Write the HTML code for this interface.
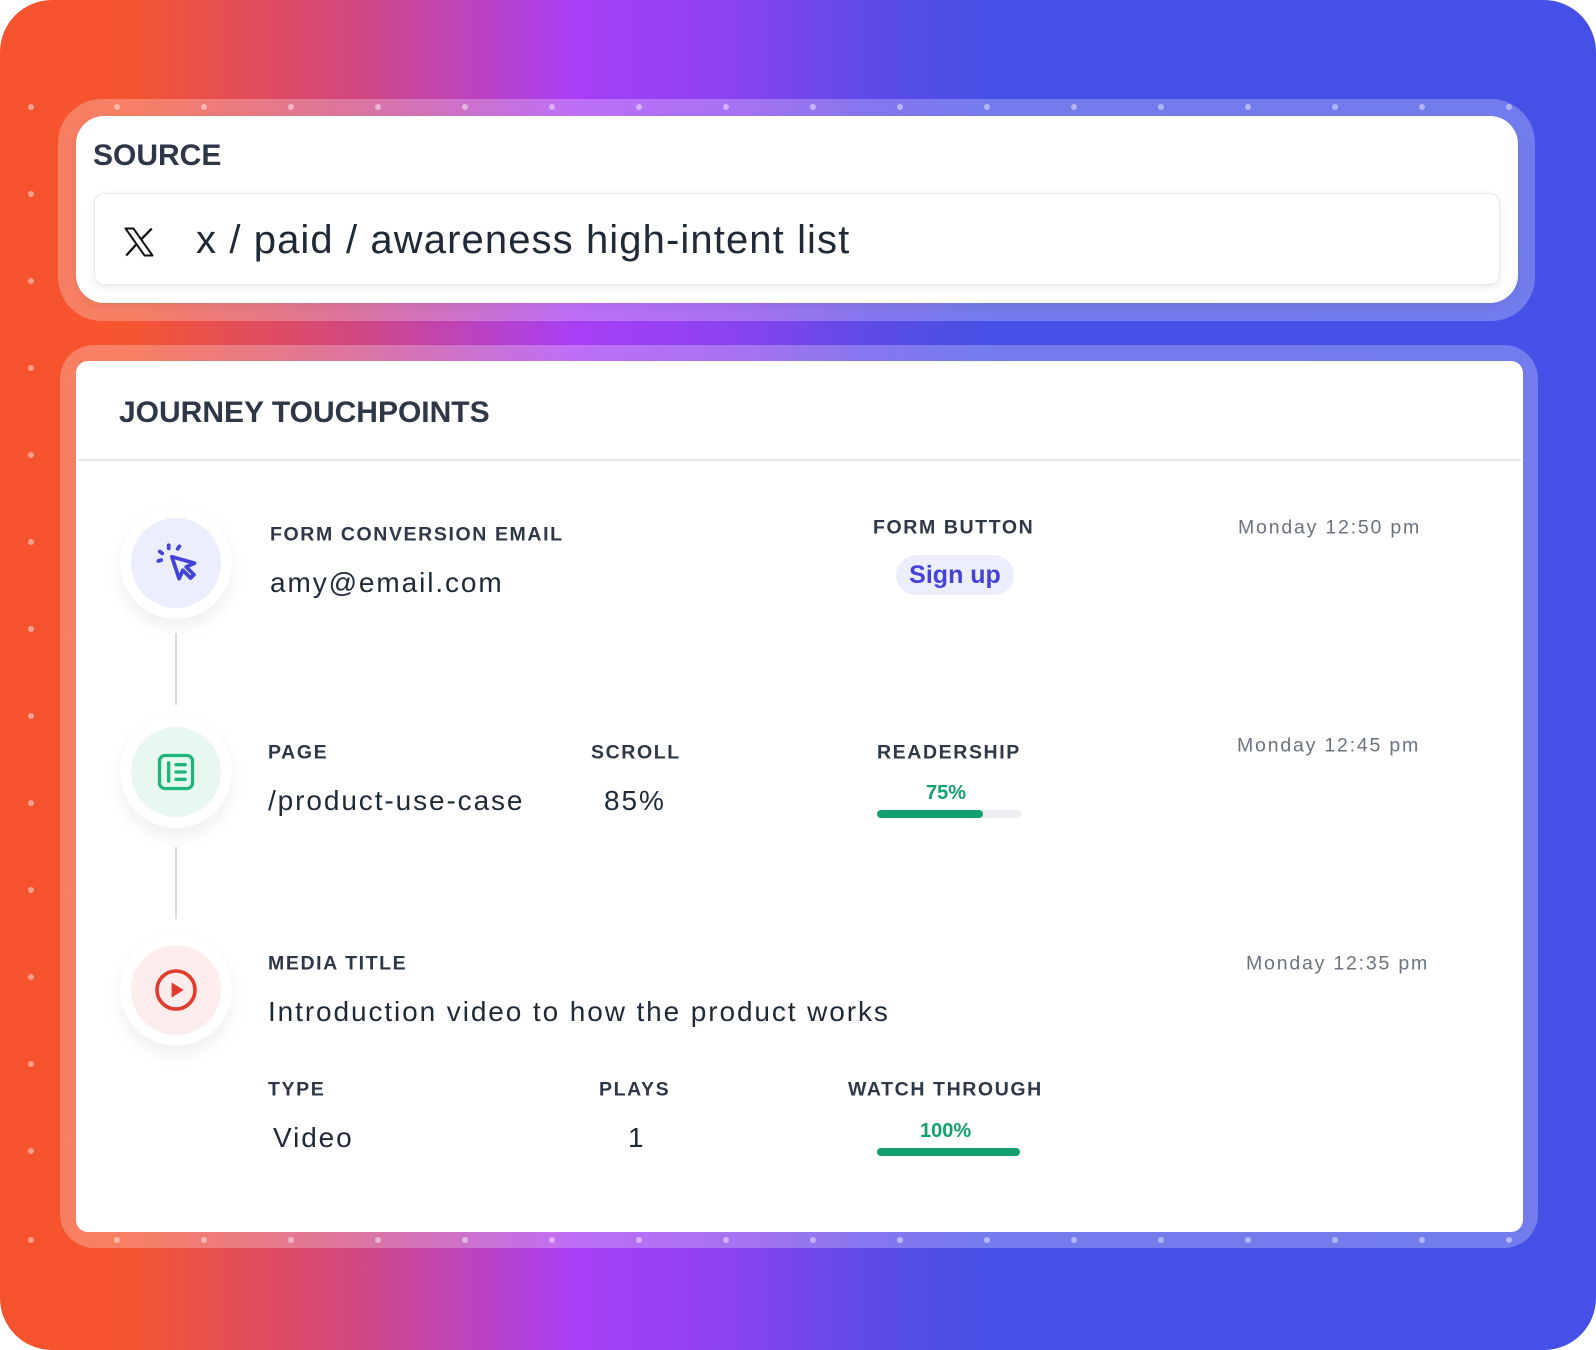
<!DOCTYPE html>
<html><head><meta charset="utf-8"><style>
*{margin:0;padding:0;box-sizing:border-box}
html,body{width:1596px;height:1350px;background:#fff;overflow:hidden}
body{font-family:"Liberation Sans",sans-serif;position:relative}
.bg{position:absolute;left:0;top:0;width:1596px;height:1350px;border-radius:52px;
background:linear-gradient(90deg,#f5522e 0%,#f5552f 8%,#d2487e 22%,#a83ff5 36%,#8a43f0 46%,#5f4ae8 54%,#4650e6 62%,#4550e6 100%)}
.frame{position:absolute;background:rgba(255,255,255,0.25)}
.card{position:absolute;background:#fff}
.dot{position:absolute;width:6px;height:6px;border-radius:50%;background:rgba(255,255,255,0.45)}
.t{position:absolute;transform:translateY(-50%);line-height:1.2;white-space:nowrap}
.lab{font-size:19.5px;font-weight:600;letter-spacing:1.6px;color:#2d3748}
.val{font-size:28px;color:#1f2937;letter-spacing:1.9px}
.tm{font-size:19.5px;color:#6b7280;letter-spacing:1.8px}
.circ{position:absolute;width:112px;height:112px;border-radius:50%;background:#fff;box-shadow:0 8px 18px rgba(0,0,0,0.07)}
.circ .in{position:absolute;left:11px;top:11px;width:90px;height:90px;border-radius:50%;display:flex;align-items:center;justify-content:center}
.line{position:absolute;left:175px;width:2px;background:#d9dbe0}
.bar{position:absolute;height:8px;border-radius:4px;background:#eceef1}
.bar i{position:absolute;left:0;top:0;height:8px;border-radius:4px;background:#13a06f}
.pct{font-size:20px;font-weight:700;color:#13a06f}
</style></head><body>
<div class="bg"></div>

<div class="frame" style="left:58px;top:99px;width:1477px;height:222px;border-radius:44px"></div>
<div class="card" style="left:76px;top:116px;width:1442px;height:187px;border-radius:28px;box-shadow:0 4px 12px rgba(0,0,0,0.06)"></div>
<div class="t" style="left:93px;top:156px;font-size:30px;font-weight:600;color:#2d3748">SOURCE</div>
<div style="position:absolute;left:94px;top:193px;width:1406px;height:92px;border-radius:10px;border:1.5px solid #e6e8ec;background:#fff;box-shadow:0 3px 10px rgba(0,0,0,0.07)"></div>
<svg style="position:absolute;left:122px;top:225px" width="34" height="34" viewBox="0 0 24 24"><path d="M2.5 2.5h5.6l13.4 19h-5.6z" fill="none" stroke="#111" stroke-width="1.4" stroke-linejoin="round"/><path d="M3 21.5l7.6-8.4M13.4 10.3L21 2.5" stroke="#111" stroke-width="1.6"/></svg>
<div class="t" style="left:196px;top:240px;font-size:40px;color:#1f2937;letter-spacing:1.1px">x / paid / awareness high-intent list</div>

<div class="frame" style="left:60px;top:345px;width:1478px;height:903px;border-radius:34px"></div>
<div class="card" style="left:76px;top:361px;width:1447px;height:871px;border-radius:12px"></div>
<div class="t" style="left:119px;top:413px;font-size:30px;font-weight:600;color:#2d3748">JOURNEY TOUCHPOINTS</div>
<div style="position:absolute;left:78px;top:459px;width:1443px;height:2px;background:#e8e9ec"></div>

<div class="line" style="top:633px;height:72px"></div>
<div class="line" style="top:847px;height:72px"></div>

<div class="circ" style="left:120px;top:507px"><div class="in" style="background:#eceefe">
<svg width="50" height="50" viewBox="0 0 24 24" fill="none" stroke="#4343d8" stroke-width="1.8" stroke-linecap="round" stroke-linejoin="round"><path d="M10 9l3.5 10.5 1.8-4 3.7 3.7 1.6-1.6-3.7-3.7 4-1.8z"/><path d="M8.5 3.5v1.5M4.2 6.5l1.2.9M3.5 11l1.4-.4M12.8 5.2l.8-1.2"/></svg></div></div>

<div class="circ" style="left:120px;top:716px"><div class="in" style="background:#e6f8f0">
<svg width="44" height="44" viewBox="0 0 24 24" fill="none" stroke="#1fb57a" stroke-width="1.8" stroke-linecap="round"><rect x="3" y="3" width="18" height="18" rx="3"/><path d="M8 7v10M12 8h5M12 12h5M12 16h5"/></svg></div></div>

<div class="circ" style="left:120px;top:934px"><div class="in" style="background:#fdecec">
<svg width="48" height="48" viewBox="0 0 24 24" fill="none"><circle cx="12" cy="12" r="9.5" stroke="#e23b2e" stroke-width="1.8"/><path d="M9.8 8.2v7.6l6-3.8z" fill="#e23b2e"/></svg></div></div>

<div class="t lab" style="left:270px;top:535px">FORM CONVERSION EMAIL</div>
<div class="t val" style="left:270px;top:583px">amy@email.com</div>
<div class="t lab" style="left:873px;top:528px">FORM BUTTON</div>
<div style="position:absolute;left:896px;top:555px;width:118px;height:40px;border-radius:20px;background:#eceefe;color:#4343d8;font-size:25px;font-weight:600;line-height:40px;text-align:center">Sign up</div>
<div class="t tm" style="left:1238px;top:528px">Monday 12:50 pm</div>

<div class="t lab" style="left:268px;top:753px">PAGE</div>
<div class="t lab" style="left:591px;top:753px">SCROLL</div>
<div class="t lab" style="left:877px;top:753px">READERSHIP</div>
<div class="t val" style="left:268px;top:801px">/product-use-case</div>
<div class="t val" style="left:604px;top:801px">85%</div>
<div class="t pct" style="left:926px;top:793px">75%</div>
<div class="bar" style="left:877px;top:810px;width:144px"><i style="width:106px"></i></div>
<div class="t tm" style="left:1237px;top:746px">Monday 12:45 pm</div>

<div class="t lab" style="left:268px;top:964px">MEDIA TITLE</div>
<div class="t val" style="left:268px;top:1012px">Introduction video to how the product works</div>
<div class="t tm" style="left:1246px;top:964px">Monday 12:35 pm</div>
<div class="t lab" style="left:268px;top:1090px">TYPE</div>
<div class="t lab" style="left:599px;top:1090px">PLAYS</div>
<div class="t lab" style="left:848px;top:1090px">WATCH THROUGH</div>
<div class="t val" style="left:273px;top:1138px">Video</div>
<div class="t val" style="left:628px;top:1138px">1</div>
<div class="t pct" style="left:920px;top:1131px">100%</div>
<div class="bar" style="left:877px;top:1148px;width:143px"><i style="width:143px"></i></div>

<div class="dot" style="left:28px;top:104px"></div><div class="dot" style="left:28px;top:191px"></div><div class="dot" style="left:28px;top:278px"></div><div class="dot" style="left:28px;top:365px"></div><div class="dot" style="left:28px;top:452px"></div><div class="dot" style="left:28px;top:539px"></div><div class="dot" style="left:28px;top:626px"></div><div class="dot" style="left:28px;top:713px"></div><div class="dot" style="left:28px;top:800px"></div><div class="dot" style="left:28px;top:887px"></div><div class="dot" style="left:28px;top:974px"></div><div class="dot" style="left:28px;top:1061px"></div><div class="dot" style="left:28px;top:1148px"></div><div class="dot" style="left:28px;top:1237px"></div>
<div class="dot" style="left:114px;top:104px"></div><div class="dot" style="left:201px;top:104px"></div><div class="dot" style="left:288px;top:104px"></div><div class="dot" style="left:375px;top:104px"></div><div class="dot" style="left:462px;top:104px"></div><div class="dot" style="left:549px;top:104px"></div><div class="dot" style="left:636px;top:104px"></div><div class="dot" style="left:723px;top:104px"></div><div class="dot" style="left:810px;top:104px"></div><div class="dot" style="left:897px;top:104px"></div><div class="dot" style="left:984px;top:104px"></div><div class="dot" style="left:1071px;top:104px"></div><div class="dot" style="left:1158px;top:104px"></div><div class="dot" style="left:1245px;top:104px"></div><div class="dot" style="left:1332px;top:104px"></div><div class="dot" style="left:1419px;top:104px"></div><div class="dot" style="left:1506px;top:104px"></div>
<div class="dot" style="left:114px;top:1237px"></div><div class="dot" style="left:201px;top:1237px"></div><div class="dot" style="left:288px;top:1237px"></div><div class="dot" style="left:375px;top:1237px"></div><div class="dot" style="left:462px;top:1237px"></div><div class="dot" style="left:549px;top:1237px"></div><div class="dot" style="left:636px;top:1237px"></div><div class="dot" style="left:723px;top:1237px"></div><div class="dot" style="left:810px;top:1237px"></div><div class="dot" style="left:897px;top:1237px"></div><div class="dot" style="left:984px;top:1237px"></div><div class="dot" style="left:1071px;top:1237px"></div><div class="dot" style="left:1158px;top:1237px"></div><div class="dot" style="left:1245px;top:1237px"></div><div class="dot" style="left:1332px;top:1237px"></div><div class="dot" style="left:1419px;top:1237px"></div><div class="dot" style="left:1506px;top:1237px"></div>
</body></html>
